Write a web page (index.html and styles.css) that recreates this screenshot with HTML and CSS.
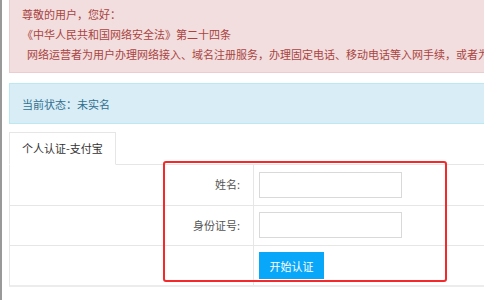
FILE: index.html
```html
<!DOCTYPE html>
<html lang="zh-CN">
<head>
<meta charset="utf-8">
<title>实名认证</title>
<link rel="stylesheet" href="styles.css">
</head>
<body>
<div class="page">
  <div class="alert alert-danger">
    <div>尊敬的用户，您好：</div>
    <div>《中华人民共和国网络安全法》第二十四条</div>
    <div class="indent">网络运营者为用户办理网络接入、域名注册服务，办理固定电话、移动电话等入网手续，或者为用户提供信息发布、即时通讯等服务</div>
  </div>
  <div class="alert alert-info">当前状态：未实名</div>
  <div class="tabs">
    <div class="tab active">个人认证-支付宝</div>
  </div>
  <div class="panel">
    <div class="form-row">
      <div class="label">姓名:</div>
      <div class="field"><input class="input" type="text"></div>
    </div>
    <div class="form-row">
      <div class="label">身份证号:</div>
      <div class="field"><input class="input" type="text"></div>
    </div>
    <div class="form-row">
      <div class="label"></div>
      <div class="field"><button class="btn" type="button">开始认证</button></div>
    </div>
  </div>
  <div class="highlight"></div>
</div>
</body>
</html>
```
FILE: styles.css
```css
html, body {
  margin: 0;
  padding: 0;
  background: #fff;
  overflow: hidden;
  width: 484px;
  height: 300px;
}
body {
  font-family: "Noto Sans CJK SC", "Microsoft YaHei", sans-serif;
  font-size: 11px;
  color: #333;
}
.page {
  position: relative;
  width: 720px;
  height: 300px;
  border-left: 2px solid #999;
  padding-left: 7px;
  box-sizing: border-box;
}
.alert {
  border: 1px solid transparent;
  white-space: nowrap;
  overflow: hidden;
}
.alert-danger {
  background: #f2dede;
  border-color: #ebccd1;
  border-top: none;
  color: #a94442;
  padding: 4px 12px 8px;
  line-height: 20px;
}
.indent {
  padding-left: 5px;
}
.alert-info {
  margin-top: 10px;
  background: #d9edf7;
  border-color: #bce8f1;
  color: #31708f;
  padding: 10px 12px 9px;
  line-height: 20px;
}
.tabs {
  margin-top: 8px;
  display: flex;
  position: relative;
  z-index: 1;
  margin-bottom: -1px;
}
.tab {
  border: 1px solid #e6e6e6;
  border-bottom: 1px solid #fff;
  background: #fff;
  padding: 0 12px;
  line-height: 31px;
  color: #333;
}
.panel {
  border-top: 1px solid #e6e6e6;
  border-left: 1px solid #e6e6e6;
  border-bottom: 2px solid #ececec;
}
.form-row {
  display: grid;
  grid-template-columns: 244px 1fr;
  border-top: 1px solid #e6e6e6;
  height: 40px;
  box-sizing: border-box;
}
.form-row:first-child {
  border-top: none;
  height: 40px;
}
.label {
  border-right: 1px solid #e6e6e6;
  text-align: right;
  padding-right: 13px;
  line-height: 39px;
  color: #555;
}
.field {
  padding: 6px 5px 0;
}
.form-row:first-child .field {
  padding-top: 7px;
}
.input {
  display: block;
  width: 143px;
  height: 26px;
  box-sizing: border-box;
  border: 1px solid #d9d9d9;
  margin: 0;
  padding: 0 6px;
  font: inherit;
  background: #fff;
}
.btn {
  display: block;
  width: 65px;
  height: 27px;
  border: none;
  margin: 0;
  padding: 0;
  background: #09a7f9;
  color: #fff;
  font: inherit;
  font-size: 11px;
}
.highlight {
  position: absolute;
  left: 161px;
  top: 161px;
  width: 284px;
  height: 121px;
  box-sizing: border-box;
  border: 2px solid #f42a2a;
  border-radius: 3px;
  pointer-events: none;
}
```
